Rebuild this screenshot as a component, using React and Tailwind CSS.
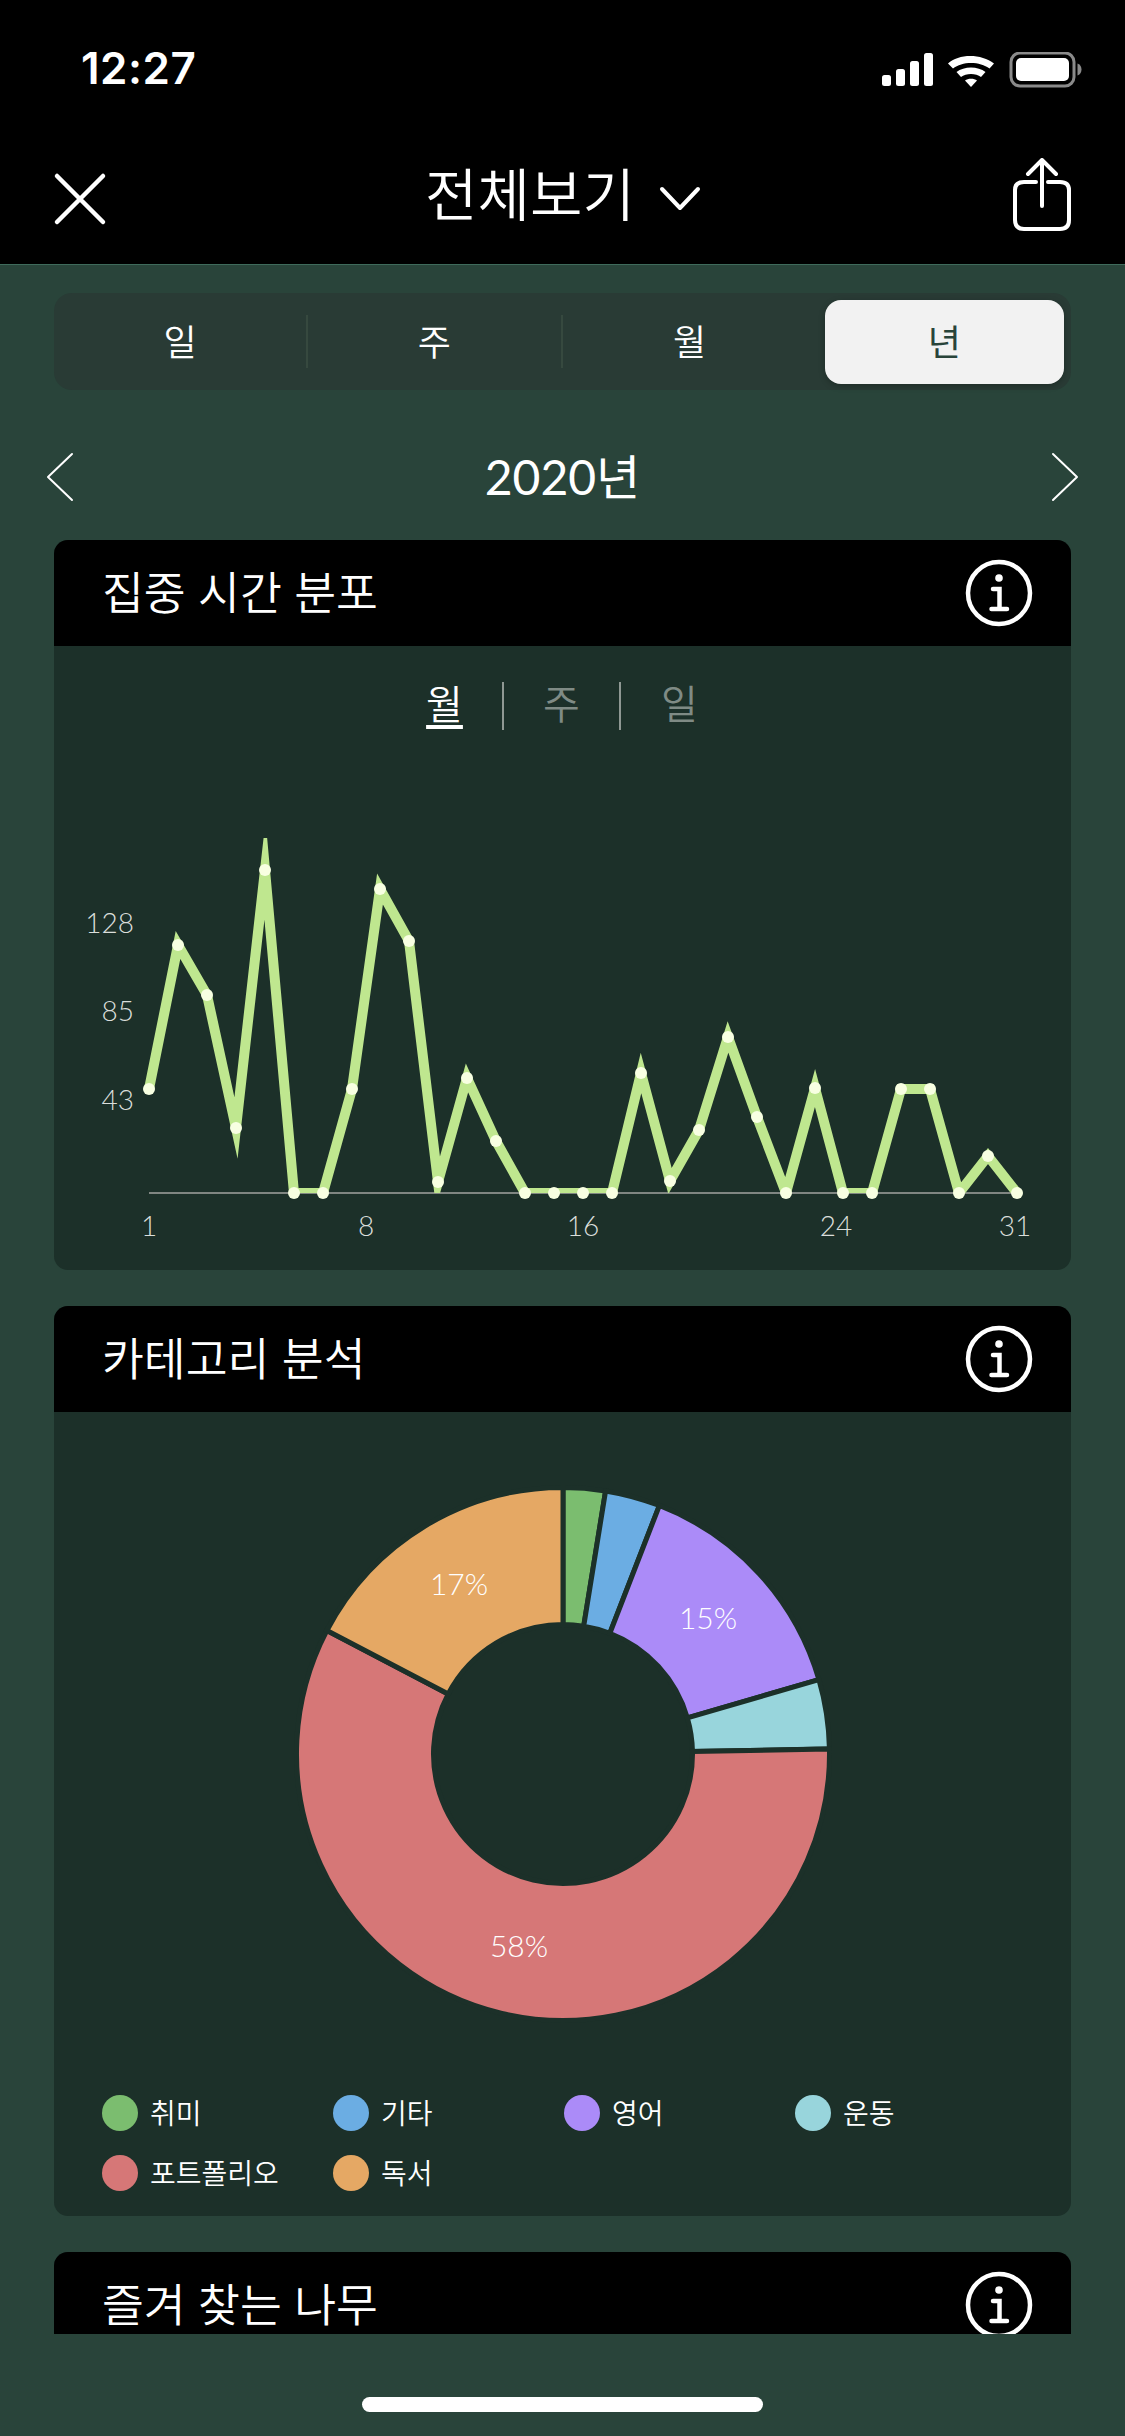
const pts = [[149,1089],[178,945],[207,995],[236,1128],[265,870],[294,1193],[323,1193],[352,1089],[380,889],[409,941],[438,1182],[467,1078],[496,1141],[525,1193],[554,1193],[583,1193],[612,1193],[641,1073],[670,1181],[699,1130],[728,1037],[757,1117],[786,1193],[815,1088],[843,1193],[872,1193],[901,1089],[930,1089],[959,1193],[988,1156],[1017,1193]];

function LineChart() {
  return (
    <svg width="1017" height="510" viewBox="54 760 1017 510" className="block mt-[30px]">
      <defs>
        <clipPath id="plot"><rect x="54" y="838" width="1017" height="355" /></clipPath>
      </defs>
      <line x1="149" y1="1193" x2="1017" y2="1193" stroke="#808682" strokeWidth="2" />
      <polyline clipPath="url(#plot)" points={pts.map((p) => p.join(",")).join(" ")} fill="none" stroke="#BFE78F" strokeWidth="10" strokeLinejoin="miter" strokeMiterlimit="12" />
      {pts.map((p, i) => (<circle key={i} cx={p[0]} cy={p[1]} r="6" fill="#F8FFE2" />))}
      <g fill="#DADEDB" fontSize="28" fontWeight="300" fontFamily="Lato, sans-serif">
        <text x="134" y="933" textAnchor="end">128</text>
        <text x="134" y="1021" textAnchor="end">85</text>
        <text x="134" y="1110" textAnchor="end">43</text>
        <text x="149" y="1236" textAnchor="middle">1</text>
        <text x="366" y="1236" textAnchor="middle">8</text>
        <text x="583" y="1236" textAnchor="middle">16</text>
        <text x="836" y="1236" textAnchor="middle">24</text>
        <text x="1015" y="1236" textAnchor="middle">31</text>
      </g>
    </svg>
  );
}

const CX = 270, CY = 270, R = 266.5, r = 129.5;
const segs = [[0,9.2,"#7BBD6F"],[9.2,21.2,"#6BADE3"],[21.2,73.8,"#AB8BF8"],[73.8,88.9,"#98D5DC"],[88.9,297.6,"#D67777"],[297.6,360,"#E5A864"]];
function pol(rad, a) {
  const t = (a * Math.PI) / 180;
  return [CX + rad * Math.sin(t), CY - rad * Math.cos(t)];
}
function arc(a, b) {
  const [x1, y1] = pol(R, a), [x2, y2] = pol(R, b), [x3, y3] = pol(r, b), [x4, y4] = pol(r, a);
  const large = b - a > 180 ? 1 : 0;
  return `M${x1} ${y1}A${R} ${R} 0 ${large} 1 ${x2} ${y2}L${x3} ${y3}A${r} ${r} 0 ${large} 0 ${x4} ${y4}Z`;
}

function Donut() {
  return (
    <svg width="540" height="540" viewBox="0 0 540 540" className="block self-center mt-[72px]">
      {segs.map((s, i) => (<path key={i} d={arc(s[0], s[1])} fill={s[2]} stroke="#1C3029" strokeWidth="5" />))}
      <g fill="#FFFFFF" fontSize="30" fontWeight="300" fontFamily="Lato, sans-serif" textAnchor="middle">
        <text x="166" y="111">17%</text>
        <text x="415" y="145">15%</text>
        <text x="226" y="473">58%</text>
      </g>
    </svg>
  );
}

function InfoIcon() {
  return (
    <svg width="70" height="70" viewBox="0 0 70 70" fill="none" stroke="white" strokeWidth="4.5" strokeLinecap="round" className="shrink-0">
      <circle cx="35" cy="35" r="31" />
      <circle cx="35" cy="20" r="3.8" fill="white" stroke="none" />
      <path d="M29 31H35.5V50M27.5 51H43" strokeWidth="4.5" />
    </svg>
  );
}

function Card({ title, children, className = "" }) {
  return (
    <section className={`rounded-[14px] overflow-hidden bg-[#1C3029] shrink-0 ${className}`}>
      <div className="h-[106px] bg-black flex items-center justify-between pl-[48px] pr-[37px]">
        <h2 className="text-[45.5px] leading-none text-white font-[350]">{title}</h2>
        <InfoIcon />
      </div>
      {children}
    </section>
  );
}

const legend = [["취미","bg-[#7BBD6F]"],["기타","bg-[#6BADE3]"],["영어","bg-[#AB8BF8]"],["운동","bg-[#98D5DC]"],["포트폴리오","bg-[#D67777]"],["독서","bg-[#E5A864]"]];

export default function App() {
  return (
    <div className="w-[1125px] h-[2436px] overflow-hidden bg-[#29443A] flex flex-col text-white [font-family:Lato,'Noto_Sans_CJK_KR',sans-serif]">
      <header className="h-[265px] shrink-0 bg-black border-b border-[#3F6B5B] flex flex-col">
        <div className="h-[138px] flex items-start justify-between pl-[81px] pr-[43px] pt-[42px]">
          <span className="text-[44px] leading-[52px] font-semibold [font-family:Inter,sans-serif] tracking-[0.5px]">12:27</span>
          <svg width="200" height="36" viewBox="0 0 200 36" fill="white" className="mt-[10px]">
            <rect x="0" y="23" width="9" height="11" rx="2.5" />
            <rect x="14" y="17" width="9" height="17" rx="2.5" />
            <rect x="28" y="9" width="9" height="25" rx="2.5" />
            <rect x="42" y="1" width="9" height="33" rx="2.5" />
            <path d="M66 11.5C76.5 1.5 99.5 1.5 112 11.5L107.5 16.5C98 9 80 9 71 16.5Z" />
            <path d="M74.5 20C82 14 96 14 103.5 20L99 25C94 21 84 21 79 25Z" />
            <path d="M83 28.5C86 26 92 26 95 28.5L89 35Z" />
            <rect x="129" y="1" width="63" height="33" rx="9" fill="none" stroke="#8A8A8A" strokeWidth="3" />
            <rect x="134" y="6" width="53" height="23" rx="5" />
            <path d="M195.5 11.5C198.5 12.5 199.5 15 199.5 17.5C199.5 20 198.5 22.5 195.5 23.5Z" fill="#8A8A8A" />
          </svg>
        </div>
        <div className="flex-1 flex items-start justify-between pl-[52px] pr-[53px] pt-[20px]">
          <svg width="56" height="56" viewBox="0 0 56 56" className="mt-[13px]" stroke="white" strokeWidth="4.5" strokeLinecap="round">
            <path d="M5 5L51 51M51 5L5 51" />
          </svg>
          <div className="flex items-center gap-[24px] h-[70px] mt-[1px] ml-[6px]">
            <span className="text-[57px] leading-none font-[350]">전체보기</span>
            <svg width="42" height="26" viewBox="0 0 42 26" fill="none" stroke="white" strokeWidth="4" strokeLinecap="round" strokeLinejoin="round" className="mt-[8px]">
              <path d="M3 4L21 23L39 4" />
            </svg>
          </div>
          <svg width="60" height="74" viewBox="0 0 60 74" fill="none" stroke="white" strokeWidth="4" strokeLinecap="round" strokeLinejoin="round">
            <path d="M30 48V2M16 16L30 2L44 16" />
            <path d="M24 24H12C6 24 3 27 3 32V62C3 68 6 71 12 71H48C54 71 57 68 57 62V32C57 27 54 24 48 24H36" />
          </svg>
        </div>
      </header>

      <main className="h-[2069px] shrink-0 overflow-hidden px-[54px] flex flex-col">
        <div className="mt-[28px] h-[97px] shrink-0 rounded-[18px] bg-[#293B35] grid grid-cols-4 items-center">
          {["일","주","월"].map((t, i) => (
            <div key={t} className={`h-[53px] flex items-center justify-center text-[36px] font-[350] ${i < 2 ? "border-r-2 border-[#36493F]" : ""}`}>{t}</div>
          ))}
          <div className="h-[84px] ml-[8px] mr-[7px] rounded-[16px] bg-[#F2F2F2] text-[#29443A] flex items-center justify-center text-[36px] font-normal shadow-[0_2px_6px_rgba(0,0,0,0.25)]">년</div>
        </div>

        <div className="mt-[56px] h-[62px] shrink-0 flex items-center justify-between ml-[-8px] mr-[-8px]">
          <svg width="28" height="50" viewBox="0 0 28 50" fill="none" stroke="white" strokeWidth="2" strokeLinecap="round" strokeLinejoin="round"><path d="M26 2L2 25L26 48" /></svg>
          <span className="text-[48px] leading-none font-normal">2020년</span>
          <svg width="28" height="50" viewBox="0 0 28 50" fill="none" stroke="white" strokeWidth="2" strokeLinecap="round" strokeLinejoin="round"><path d="M2 2L26 25L2 48" /></svg>
        </div>

        <Card title="집중 시간 분포" className="mt-[32px] h-[730px]">
          <div className="mt-[36px] h-[48px] flex items-center justify-center text-[40px] font-[350]">
            <span className="w-[117px] text-center border-r-2 border-[#8F9893] h-[48px] leading-[44px]"><span className="underline underline-offset-[6px]">월</span></span>
            <span className="w-[117px] text-center border-r-2 border-[#8F9893] h-[48px] leading-[44px] text-[#7F8B85]">주</span>
            <span className="w-[117px] text-center h-[48px] leading-[44px] text-[#7F8B85]">일</span>
          </div>
          <LineChart />
        </Card>

        <Card title="카테고리 분석" className="mt-[36px] h-[910px] flex flex-col">
          <Donut />
          <div className="mt-[71px] pl-[48px] grid grid-cols-[231px_231px_231px_231px] gap-y-[24px]">
            {legend.map(([t, c]) => (
              <div key={t} className="flex items-center gap-[12px] h-[36px]">
                <span className={`w-[36px] h-[36px] rounded-full ${c}`} />
                <span className="text-[28px] leading-none font-[350]">{t}</span>
              </div>
            ))}
          </div>
        </Card>

        <Card title="즐겨 찾는 나무" className="mt-[36px]">
          <div className="h-[40px]" />
        </Card>
      </main>

      <div className="flex-1 flex items-start justify-center pt-[63px]">
        <div className="w-[401px] h-[15px] rounded-full bg-white" />
      </div>
    </div>
  );
}
